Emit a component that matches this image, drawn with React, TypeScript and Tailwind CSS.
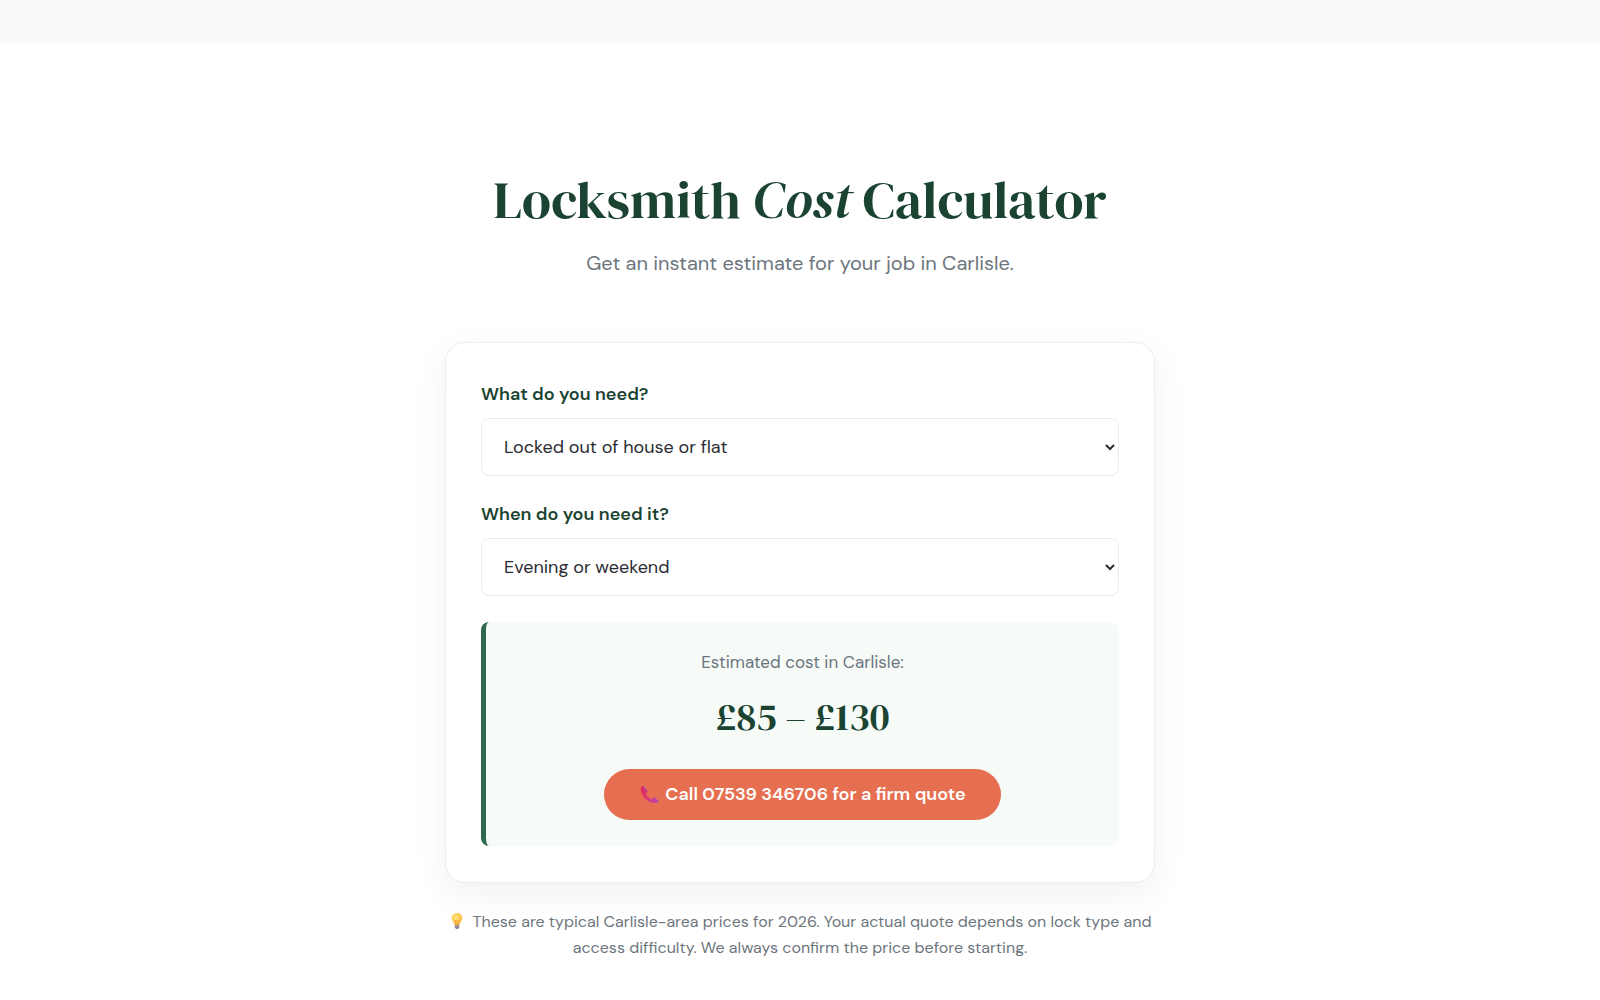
import { useState } from "react";

const jobs = [
  { id: "lockout", label: "Locked out of house or flat", low: 65, high: 100 },
  { id: "change", label: "Lock change", low: 75, high: 120 },
  { id: "upvc", label: "uPVC door repair", low: 80, high: 140 },
];

const times = [
  { id: "day", label: "Weekday daytime", extraLow: 0, extraHigh: 0 },
  { id: "evening", label: "Evening or weekend", extraLow: 20, extraHigh: 30 },
  { id: "night", label: "Overnight", extraLow: 45, extraHigh: 60 },
];

function PhoneIcon() {
  return (
    <svg viewBox="0 0 20 20" className="size-5 shrink-0" aria-hidden="true">
      <defs>
        <linearGradient id="phone" x1="0" y1="0" x2="1" y2="1">
          <stop offset="0" stopColor="#e0224f" />
          <stop offset="0.55" stopColor="#dc3a78" />
          <stop offset="1" stopColor="#b93fb0" />
        </linearGradient>
      </defs>
      <path
        d="M2.6 1.4 C1.500 2.800 1.500 5.300 2.600 8 C4.600 12.800 8.600 17 13.500 17.700 C16 18 18.200 17.900 19.200 17.200 C19.500 16.700 19.200 16.200 18.700 15.800 L16.200 12.700 C15.500 12 14.600 12.200 14.100 12.900 L13.300 14.600 C10.900 13.700 7.800 11 6.900 8.400 L8.300 7.200 C8.800 6.600 8.600 5.800 8 5 L4.600 1.400 C4 .8 3.200 .7 2.600 1.400 Z"
        fill="url(#phone)"
      />
      <path d="M4 1.700 7.800 5.600M15.500 12.800 18.900 16.600" stroke="#a94bb5" strokeWidth="1.200" strokeLinecap="round" />
    </svg>
  );
}

function BulbIcon() {
  return (
    <svg viewBox="0 0 16 18" className="mr-2 inline-block h-[18px] w-4 align-[-3px]" aria-hidden="true">
      <defs>
        <radialGradient id="bulb" cx="0.4" cy="0.35" r="0.7">
          <stop offset="0" stopColor="#ffe680" />
          <stop offset="0.6" stopColor="#fdc94f" />
          <stop offset="1" stopColor="#f2a93b" />
        </radialGradient>
      </defs>
      <path
        d="M8 1 C4.900 1 2.700 3.300 2.700 6.200 C2.700 9 5.200 10.300 5.700 13 H10.300 C10.800 10.300 13.300 9 13.300 6.200 C13.300 3.300 11.100 1 8 1 Z"
        fill="url(#bulb)"
      />
      <path d="M7 12.500 6.500 8.500 8 9.300 9.500 8.500 9 12.500" fill="none" stroke="#e89a2c" strokeWidth="0.700" />
      <path d="M5.800 13 H10.200 V15.200 L9 17 H7 L5.800 15.200 Z" fill="#8d7f88" />
      <path d="M5.800 14.400 H10.200" stroke="#c3bec6" strokeWidth="0.600" />
    </svg>
  );
}

function SelectField({
  id,
  label,
  value,
  options,
  onChange,
}: {
  id: string;
  label: string;
  value: string;
  options: { id: string; label: string }[];
  onChange: (value: string) => void;
}) {
  return (
    <div>
      <label htmlFor={id} className="mb-2.5 block text-[18px] leading-7 font-semibold text-[#1b4332]">
        {label}
      </label>
      <select
        id={id}
        value={value}
        onChange={(e) => onChange(e.target.value)}
        className="block h-[58px] w-full rounded-lg border border-[#e9ecef] bg-white pl-[18px] text-[18px] text-[#2b2d33]"
      >
        {options.map((option) => (
          <option key={option.id} value={option.id}>
            {option.label}
          </option>
        ))}
      </select>
    </div>
  );
}

export default function App() {
  const [jobId, setJobId] = useState("lockout");
  const [timeId, setTimeId] = useState("evening");

  const job = jobs.find((j) => j.id === jobId)!;
  const time = times.find((t) => t.id === timeId)!;

  return (
    <div className="min-h-screen bg-white font-['DM_Sans',Inter,sans-serif] text-[#2b2d33]">
      <div className="h-11 bg-[#f8fafc]" />
      <main className="mx-auto max-w-[710px] pt-[122px] pb-8">
        <header className="text-center">
          <h1 className="font-['DM_Serif_Display','Liberation_Serif',serif] text-[53px] leading-[68px] font-normal text-[#1b4332]">
            Locksmith <em>Cost</em> Calculator
          </h1>
          <p className="mt-3 text-[20px] leading-[34px] text-[#6c757d]">
            Get an instant estimate for your job in Carlisle.
          </p>
        </header>

        <section className="mt-[62px] rounded-[20px] border border-[#ececee] bg-white px-[35px] pt-[37px] pb-9 shadow-[0_10px_36px_rgba(0,0,0,0.06)]">
          <div className="flex flex-col gap-6">
            <SelectField id="job" label="What do you need?" value={jobId} options={jobs} onChange={setJobId} />
            <SelectField id="time" label="When do you need it?" value={timeId} options={times} onChange={setTimeId} />
          </div>

          <div className="mt-[26px] rounded-lg border-l-[5px] border-[#2d6a4f] bg-[#f6fbf8] px-6 py-[26px] text-center">
            <p className="text-[17px] leading-7 text-[#6c757d]">Estimated cost in Carlisle:</p>
            <p className="mt-[7px] font-['DM_Serif_Display','Liberation_Serif',serif] text-[39px] leading-[68px] text-[#1b4332]">
              £{job.low + time.extraLow} – £{job.high + time.extraHigh}
            </p>
            <a
              href="tel:07539346706"
              className="mt-[18px] inline-flex h-[51px] items-center gap-1.5 rounded-full bg-[#e76f51] px-[35px] text-[18px] font-semibold text-white"
            >
              <PhoneIcon />
              Call 07539 346706 for a firm quote
            </a>
          </div>
        </section>

        <p className="mt-[26px] text-center text-[16px] leading-[26px] text-[#6c757d]">
          <BulbIcon />
          These are typical Carlisle-area prices for 2026. Your actual quote depends on lock type and access
          difficulty. We always confirm the price before starting.
        </p>
      </main>
    </div>
  );
}
